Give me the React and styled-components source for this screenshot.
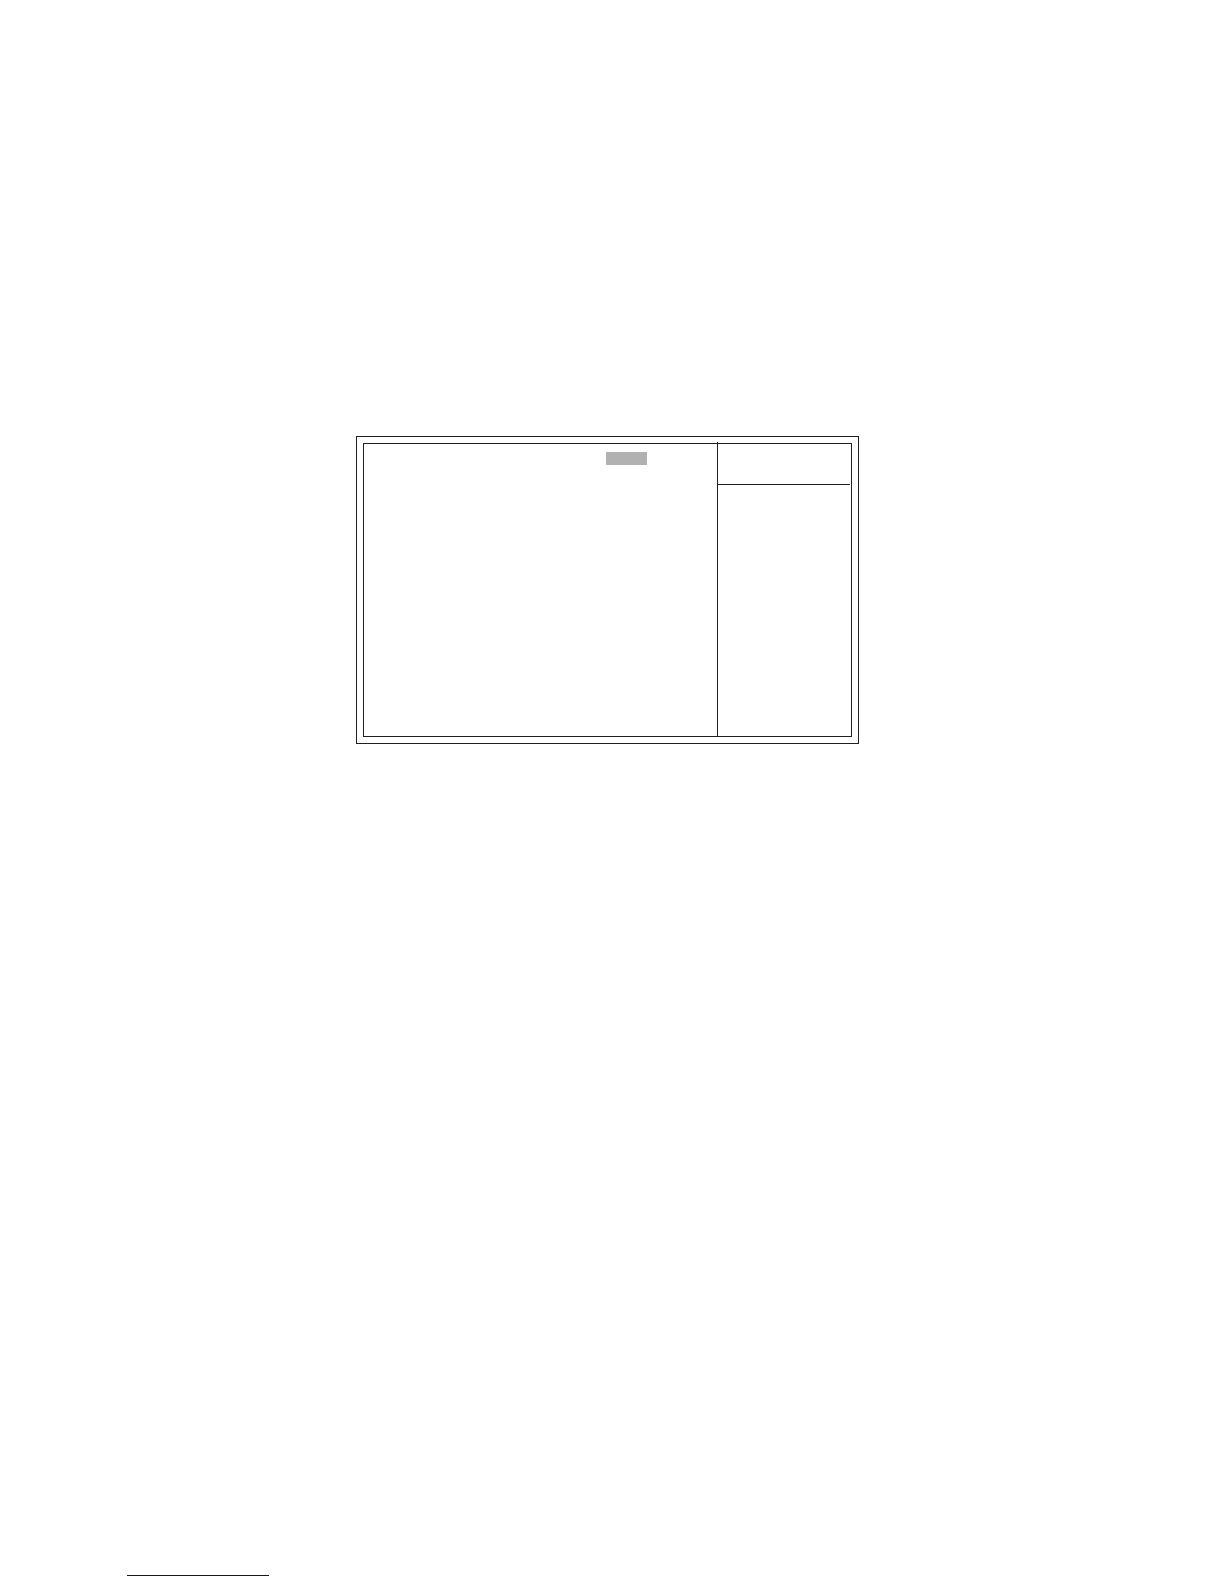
import React from "react";
import styled, { createGlobalStyle } from "styled-components";

const ink = "#231f20";
const linkBlue = "#0a0a8a";

const GlobalStyle = createGlobalStyle`
  *, *::before, *::after { box-sizing: border-box; }
  body {
    margin: 0;
    background: #ffffff;
    font-family: "Liberation Sans", Arial, sans-serif;
  }
`;

const Page = styled.div`
  display: flex;
  flex-direction: column;
  justify-content: space-between;
  min-height: 100vh;
  padding: 436px 0 8px;
`;

const Screen = styled.main`
  display: flex;
  margin: 0 365px 0 356px;
  padding: 6px;
  border: 1px solid ${ink};
`;

const Panels = styled.div`
  flex: 1;
  display: grid;
  grid-template-columns: minmax(0, 1fr) 134px;
  min-height: 294px;
  border: 1px solid ${ink};
`;

const Settings = styled.section`
  display: flex;
  justify-content: flex-end;
  align-items: flex-start;
  padding: 8px 70px 8px 8px;
`;

const Selection = styled.span`
  width: 41px;
  height: 13px;
  background: #b1b1b1;
`;

/* The divider runs through the frame and ends just above it. */
const Help = styled.aside`
  margin-top: -2px;
  padding: 2px 1px 0 0;
  border-left: 1px solid ${ink};
`;

const HelpHeader = styled.header`
  height: 41px;
  border-bottom: 1px solid ${ink};
`;

const Footer = styled.footer`
  display: flex;
  padding-left: 127px;
`;

const FooterLink = styled.a`
  width: 142px;
  height: 16px;
  border-bottom: 1px solid ${linkBlue};
`;

export default function App() {
  return (
    <>
      <GlobalStyle />
      <Page>
        <Screen>
          <Panels>
            <Settings>
              <Selection />
            </Settings>
            <Help>
              <HelpHeader />
            </Help>
          </Panels>
        </Screen>
        <Footer>
          <FooterLink href="#" />
        </Footer>
      </Page>
    </>
  );
}
